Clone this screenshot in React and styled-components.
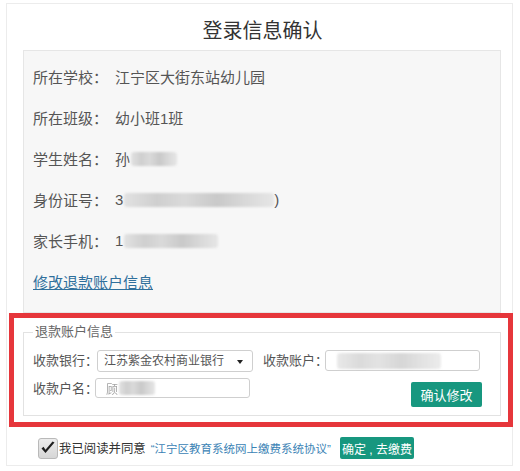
import React from 'react';
import styled, { createGlobalStyle } from 'styled-components';

const GlobalStyle = createGlobalStyle`
  html, body {
    margin: 0;
    padding: 0;
    background: #fff;
  }
  body {
    font-family: "Liberation Sans", "Noto Sans CJK SC", sans-serif;
    color: #555;
  }
  * {
    box-sizing: border-box;
  }
`;

const infoRows = [
    { label: '所在学校：', value: '江宁区大街东站幼儿园' },
    { label: '所在班级：', value: '幼小班1班' },
    { label: '学生姓名：', value: '孙', blur: 46 },
    { label: '身份证号：', value: '3', blur: 150, tail: ')' },
    { label: '家长手机：', value: '1', blur: 94 },
];

export default function App() {
    return (
        <>
            <GlobalStyle />
            <Card>
                <Title>登录信息确认</Title>

                <InfoPanel>
                    {infoRows.map((row) => (
                        <InfoRow key={row.label}>
                            <InfoLabel>{row.label}</InfoLabel>
                            <InfoValue>
                                {row.value}
                                {row.blur && <Mosaic $w={row.blur} />}
                                {row.tail}
                            </InfoValue>
                        </InfoRow>
                    ))}
                    <InfoRow>
                        <EditLink href="#">修改退款账户信息</EditLink>
                    </InfoRow>
                </InfoPanel>

                <Highlight>
                    <AccountSet>
                        <Legend>退款账户信息</Legend>

                        <FormRow $top={9}>
                            <FieldLabel $w={64}>收款银行：</FieldLabel>
                            <SelectBox>
                                江苏紫金农村商业银行
                                <Caret />
                            </SelectBox>
                            <FieldLabel $w={62} $gap={10}>收款账户：</FieldLabel>
                            <TextBox $h={21}>
                                <Mosaic $w={104} $soft />
                            </TextBox>
                        </FormRow>

                        <FormRow $top={6}>
                            <FieldLabel $w={62}>收款户名：</FieldLabel>
                            <TextBox $h={20}>
                                <NameHint>顾</NameHint>
                                <Mosaic $w={36} />
                            </TextBox>
                            <SaveButton>确认修改</SaveButton>
                        </FormRow>
                    </AccountSet>
                </Highlight>

                <AgreeRow>
                    <CheckBox>
                        <svg width="16" height="16" viewBox="0 0 16 16">
                            <path d="M1.5 8.5 L5.5 13 L14.5 2.5 L12.5 1.5 L5.5 9.8 L3.5 6.8 Z" fill="#1f1f1f" />
                        </svg>
                    </CheckBox>
                    <AgreeText>我已阅读并同意</AgreeText>
                    <AgreeLink href="#">“江宁区教育系统网上缴费系统协议”</AgreeLink>
                    <PayButton>确定 , 去缴费</PayButton>
                </AgreeRow>
            </Card>
        </>
    );
}

// Styled components
const Card = styled.div`
  margin: 3px 0 0 6px;
  width: 507px;
  border: 1px solid #ececec;
  background: #fff;
`;

const Title = styled.h1`
  margin: 0;
  height: 46px;
  padding: 15px 0 0 6px;
  line-height: 24px;
  font-size: 20px;
  font-weight: normal;
  text-align: center;
  color: #333;
`;

const InfoPanel = styled.div`
  margin: 0 11px 0 16px;
  padding: 5px 9px 10px;
  border: 1px solid #e6e6e6;
  background: #f7f7f7;
`;

const InfoRow = styled.div`
  display: flex;
  align-items: center;
  height: 41px;
  font-size: 15px;
`;

const InfoLabel = styled.span`
  width: 82px;
  white-space: nowrap;
  color: #555;
`;

const InfoValue = styled.span`
  display: flex;
  align-items: center;
  white-space: nowrap;
  color: #555;
`;

const Mosaic = styled.span`
  display: inline-block;
  width: ${(p) => p.$w}px;
  height: ${(p) => (p.$soft ? 16 : 14)}px;
  margin-left: 1px;
  border-radius: 3px;
  background: linear-gradient(
    90deg,
    #e2e2e2 0%,
    #cfcfcf 22%,
    #dadada 40%,
    #c9c9c9 62%,
    #d8d8d8 80%,
    #e6e6e6 100%
  );
  filter: blur(1.2px);
  opacity: ${(p) => (p.$soft ? 0.75 : 1)};
`;

const EditLink = styled.a`
  color: #2f6f9c;
  text-decoration: underline;
  font-size: 15px;
`;

const Highlight = styled.div`
  margin: 0 -1px 0 2px;
  padding: 5px 7px 6px 9px;
  border: 5px solid #e6363b;
  background: #fff;
`;

const AccountSet = styled.fieldset`
  margin: 0;
  padding: 0 9px 8px;
  border: 1px solid #e2e2e2;
  min-width: 0;
`;

const Legend = styled.legend`
  padding: 0 2px;
  font-size: 13px;
  line-height: 18px;
  color: #666;
`;

const FormRow = styled.div`
  display: flex;
  align-items: flex-start;
  margin-top: ${(p) => p.$top}px;
`;

const FieldLabel = styled.span`
  flex: none;
  width: ${(p) => p.$w}px;
  margin-left: ${(p) => p.$gap || 0}px;
  white-space: nowrap;
  font-size: 13px;
  line-height: 22px;
  color: #555;
`;

const SelectBox = styled.div`
  position: relative;
  flex: none;
  width: 156px;
  height: 22px;
  padding-left: 6px;
  border: 1px solid #cfcfcf;
  border-radius: 3px;
  background: #fff;
  white-space: nowrap;
  font-size: 12px;
  line-height: 20px;
  color: #555;
`;

const Caret = styled.span`
  position: absolute;
  right: 9px;
  top: 9px;
  border-left: 3.5px solid transparent;
  border-right: 3.5px solid transparent;
  border-top: 4px solid #222;
`;

const TextBox = styled.div`
  display: flex;
  align-items: center;
  flex: none;
  width: 155px;
  height: ${(p) => p.$h}px;
  padding-left: 10px;
  border: 1px solid #cfcfcf;
  border-radius: 3px;
  background: #fff;
`;

const NameHint = styled.span`
  font-size: 12px;
  color: #666;
  opacity: 0.6;
`;

const SaveButton = styled.button`
  flex: none;
  margin: 4px 9px 0 auto;
  width: 71px;
  height: 25px;
  padding: 0;
  border: none;
  border-radius: 2px;
  background: #17977f;
  color: #fff;
  font-family: inherit;
  font-size: 13px;
`;

const AgreeRow = styled.div`
  display: flex;
  align-items: center;
  height: 38px;
  padding: 10px 0 6px 31px;
`;

const CheckBox = styled.span`
  display: flex;
  align-items: center;
  justify-content: center;
  width: 20px;
  height: 21px;
  border: 1px solid #b9b9b9;
  border-radius: 3px;
  background: linear-gradient(#ececec, #d6d6d6);
`;

const AgreeText = styled.span`
  margin-left: 1px;
  white-space: nowrap;
  font-size: 12.4px;
  color: #333;
`;

const AgreeLink = styled.a`
  margin-left: 5px;
  white-space: nowrap;
  font-size: 11.5px;
  color: #3b83b5;
  text-decoration: none;
`;

const PayButton = styled.button`
  margin-left: 9px;
  width: 74px;
  height: 22px;
  padding: 0;
  border: none;
  border-radius: 2px;
  background: #17977f;
  color: #fff;
  font-family: inherit;
  font-size: 12px;
  white-space: nowrap;
`;
